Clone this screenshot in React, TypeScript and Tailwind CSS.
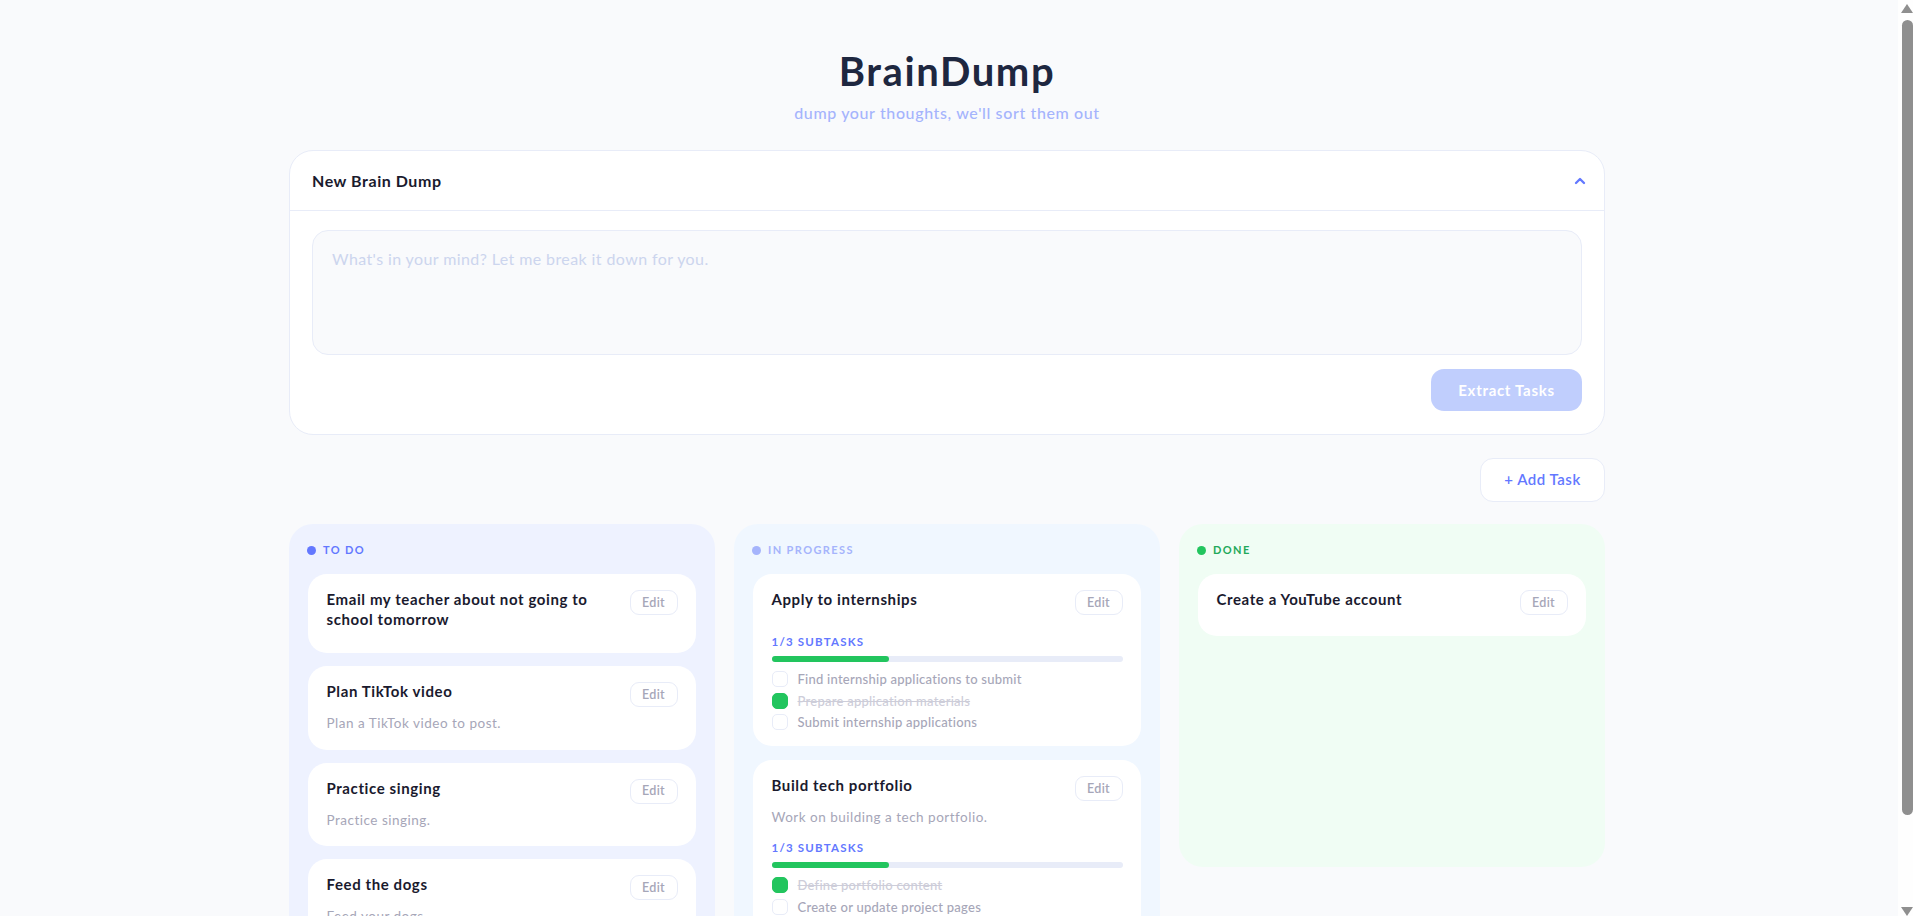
import { ChevronUp } from "lucide-react";

type Subtask = { label: string; done?: boolean };
type Task = { title: string; desc?: string; subtasks?: Subtask[]; wrap?: boolean };

const columns: { name: string; bg: string; dot: string; text: string; gap: string; tasks: Task[] }[] = [
  {
    name: "TO DO",
    bg: "bg-[#eef2ff]",
    dot: "bg-[#6378ff]",
    text: "text-[#6378ff]",
    gap: "gap-[13px]",
    tasks: [
      { title: "Email my teacher about not going to school tomorrow", wrap: true },
      { title: "Plan TikTok video", desc: "Plan a TikTok video to post." },
      { title: "Practice singing", desc: "Practice singing." },
      { title: "Feed the dogs", desc: "Feed your dogs." },
    ],
  },
  {
    name: "IN PROGRESS",
    bg: "bg-[#f0f7ff]",
    dot: "bg-[#a5b4fc]",
    text: "text-[#a5b4fc]",
    gap: "gap-[14px]",
    tasks: [
      {
        title: "Apply to internships",
        subtasks: [
          { label: "Find internship applications to submit" },
          { label: "Prepare application materials", done: true },
          { label: "Submit internship applications" },
        ],
      },
      {
        title: "Build tech portfolio",
        desc: "Work on building a tech portfolio.",
        subtasks: [
          { label: "Define portfolio content", done: true },
          { label: "Create or update project pages" },
          { label: "Publish the portfolio" },
        ],
      },
    ],
  },
  {
    name: "DONE",
    bg: "bg-[#f0fdf4]",
    dot: "bg-[#22c55e]",
    text: "text-[#22a95a]",
    gap: "gap-[13px]",
    tasks: [{ title: "Create a YouTube account" }],
  },
];

function TaskCard({ task }: { task: Task }) {
  const done = task.subtasks?.filter((s) => s.done).length ?? 0;
  const total = task.subtasks?.length ?? 0;

  return (
    <div className="rounded-[19px] bg-white px-[18.5px] pt-4 pb-[14px]">
      <div className={`flex min-h-[32px] items-start justify-between gap-3 ${task.wrap ? "pb-[10px]" : ""}`}>
        <p className="-mt-px text-[15px] leading-5 font-bold tracking-[0.6px] text-[#1a1a2e]">{task.title}</p>
        <button className="h-[25px] w-[48px] shrink-0 rounded-[9px] border border-[#e8ecf8] bg-white pt-px text-[12.5px] font-semibold tracking-[0.3px] text-[#a6a6b8]">
          Edit
        </button>
      </div>
      {task.desc && <p className={`text-[13.5px] leading-[18px] tracking-[0.5px] text-[#a6a6b8] ${task.subtasks ? "" : "mb-[3.5px]"}`}>{task.desc}</p>}
      {task.subtasks ? (
        <div className={`pb-[2px] ${task.desc ? "mt-[14px]" : "mt-[12px]"}`}>
          <p className="text-[11.5px] leading-[16px] font-bold tracking-[1.2px] text-[#6378ff]">
            {done}/{total} SUBTASKS
          </p>
          <div className="mt-[6px] h-[6px] w-full rounded-full bg-[#e8ecf8]">
            <div className="h-[6px] rounded-full bg-[#22c55e]" style={{ width: `${(done / total) * 100}%` }} />
          </div>
          <ul className="mt-[9px] flex flex-col gap-[5.5px]">
            {task.subtasks.map((s) => (
              <li key={s.label} className="flex h-4 items-center gap-[10px]">
                <span className={`h-4 w-4 shrink-0 rounded-[5px] border ${s.done ? "border-[#22c55e] bg-[#22c55e]" : "border-[#e8ecf8] bg-white"}`} />
                <span className={`text-[13px] leading-4 font-medium tracking-[0.25px] ${s.done ? "text-[#cdcdd9] line-through" : "text-[#a6a6b8]"}`}>{s.label}</span>
              </li>
            ))}
          </ul>
        </div>
      ) : null}
    </div>
  );
}

function Scrollbar() {
  return (
    <div className="fixed top-0 right-0 h-screen w-[15px] bg-[#fefefe]">
      <svg className="absolute top-[4px] left-[3px]" width="12" height="9" viewBox="0 0 12 9">
        <path d="M6 0 L12 9 L0 9 Z" fill="#8f8f8f" />
      </svg>
      <div className="absolute top-[20px] left-[4px] h-[795px] w-[11px] rounded-t-[6px] rounded-b-[6px] bg-[#8f8f8f]" />
      <svg className="absolute bottom-0 left-[3px]" width="12" height="9" viewBox="0 0 12 9">
        <path d="M0 0 L12 0 L6 9 Z" fill="#8f8f8f" />
      </svg>
    </div>
  );
}

export default function App() {
  return (
    <div className="h-screen overflow-y-scroll bg-[#f9fafc] pr-[19px] font-['Lato',sans-serif]">
      <main className="mx-auto w-[1316px] pt-[46px] pb-[45px]">
        <header className="text-center">
          <h1 className="text-[40px] leading-[50px] font-bold tracking-[1.6px] text-[#1e2740]">BrainDump</h1>
          <p className="mt-[5px] text-[16px] leading-6 font-medium tracking-[0.62px] text-[#a5b4fc]">dump your thoughts, we'll sort them out</p>
        </header>

        <section className="mt-[25px] h-[285px] rounded-[24px] border border-[#e8ecf8] bg-white">
          <div className="flex h-[60px] items-center justify-between border-b border-[#e8ecf8] pr-[16px] pl-[22px]">
            <h2 className="text-[16px] font-bold tracking-[0.55px] text-[#1a1a2e]">New Brain Dump</h2>
            <ChevronUp className="h-4 w-4 text-[#6378ff]" strokeWidth={3.5} />
          </div>
          <div className="px-[22px] pt-[19px]">
            <div className="h-[125px] rounded-[16px] border border-[#e8ecf8] bg-[#f9fafc] px-[19px] py-[18px] text-[16px] leading-5 tracking-[0.4px] text-[#ccd5ee]">
              What's in your mind? Let me break it down for you.
            </div>
            <div className="mt-[14px] flex justify-end">
              <button className="h-[42px] w-[151px] rounded-[13px] bg-[#c0cefd] text-[15px] font-bold tracking-[0.7px] text-white">Extract Tasks</button>
            </div>
          </div>
        </section>

        <div className="mt-[23px] flex justify-end">
          <button className="h-[44px] w-[125px] rounded-[13px] border border-[#e8ecf8] bg-white pb-[2px] text-[15px] font-semibold tracking-[0.5px] text-[#6378ff]">+ Add Task</button>
        </div>

        <div className="mt-[22px] grid grid-cols-3 items-start gap-[19px]">
          {columns.map((col) => (
            <div key={col.name} className={`min-h-[343px] rounded-[24px] px-[19px] pt-[19px] pb-[19px] ${col.bg}`}>
              <div className="-ml-px flex h-[14px] items-center gap-[7px]">
                <span className={`h-[9px] w-[9px] rounded-full ${col.dot}`} />
                <span className={`text-[11px] font-bold tracking-[1.4px] ${col.text}`}>{col.name}</span>
              </div>
              <div className={`mt-[17px] flex flex-col ${col.gap}`}>
                {col.tasks.map((t) => (
                  <TaskCard key={t.title} task={t} />
                ))}
              </div>
            </div>
          ))}
        </div>
      </main>
      <Scrollbar />
    </div>
  );
}
